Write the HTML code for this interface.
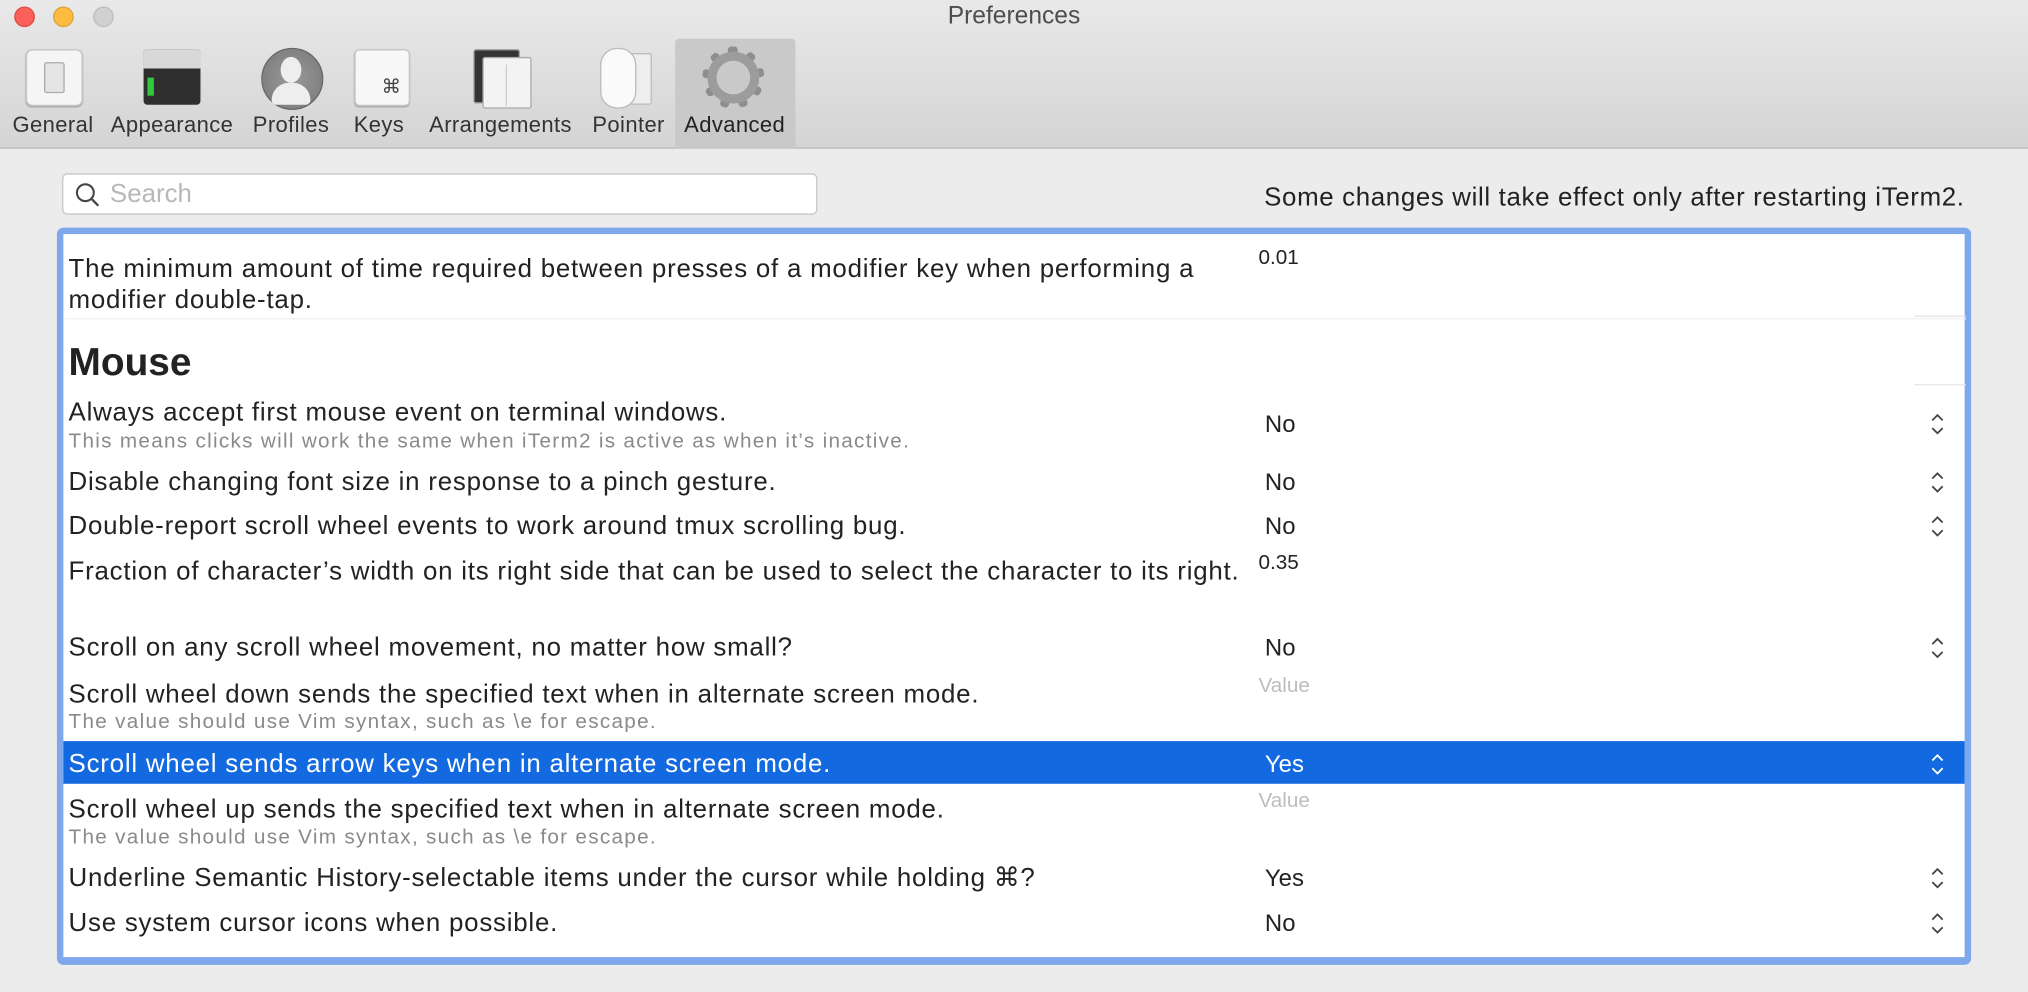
<!DOCTYPE html>
<html><head><meta charset="utf-8"><style>
html,body{margin:0;padding:0;width:2028px;height:992px;overflow:hidden;background:#ececec}
#s{position:absolute;left:0;top:0;width:1568px;height:767px;transform:scale(1.29337);transform-origin:0 0;font-family:"Liberation Sans",sans-serif;color:#222;background:#ececec}
.a{position:absolute;white-space:nowrap}
.t{font-size:20px;letter-spacing:0.6px;height:24px;line-height:24px}
.sub{font-size:16px;letter-spacing:1px;color:#8a8a8a;height:18px;line-height:18px}
.v{font-size:18.5px;height:24px;line-height:24px}
.vs{font-size:16px;height:20px;line-height:20px}
.ch{position:absolute;width:12px;height:20px}
.lab{position:absolute;top:87px;font-size:17px;letter-spacing:0.3px;color:#333;text-align:center;width:130px;height:20px;line-height:20px}
</style></head><body><div id="s">
<div class="a" style="left:0;top:0;width:1568px;height:114px;background:linear-gradient(#e9e9e9,#d4d4d4);border-bottom:1px solid #b9b9b9"></div>
<div class="a" style="left:11px;top:5px;width:14px;height:14px;border-radius:50%;background:#fc605b;border:0.5px solid #de4b45"></div>
<div class="a" style="left:41px;top:5px;width:14px;height:14px;border-radius:50%;background:#fdbc40;border:0.5px solid #dea236"></div>
<div class="a" style="left:72px;top:5px;width:14px;height:14px;border-radius:50%;background:#d0d0d0;border:0.5px solid #bdbdbd"></div>
<div class="a" style="left:0;top:3px;width:1568px;text-align:center;font-size:19px;color:#4d4d4d;line-height:20px">Preferences</div>
<div class="a" style="left:522px;top:30px;width:93px;height:85px;background:#c9c9c9;border-radius:3px 3px 0 0"></div>
<div class="a" style="left:20px;top:38px;width:42px;height:42px;background:#f5f5f5;border:1px solid #c5c5c5;border-radius:5px;box-shadow:0 1px 1px #aaa"></div>
<div class="a" style="left:34px;top:48px;width:14px;height:22px;background:#e4e4e4;border:1px solid #aaa;border-radius:2px"></div>
<div class="a" style="left:111px;top:38px;width:44px;height:43px;background:#2e2e2e;border-radius:3px"></div>
<div class="a" style="left:111px;top:38px;width:44px;height:15px;background:#d8d8d8;border-radius:3px 3px 0 0"></div>
<div class="a" style="left:114px;top:60px;width:5px;height:14px;background:#2fc83a"></div>
<div class="a" style="left:202px;top:37px;width:46px;height:46px;border-radius:50%;background:radial-gradient(#9a9a9a,#777);border:1px solid #666"></div>
<div class="a" style="left:217px;top:44px;width:16px;height:20px;border-radius:50%;background:#eee"></div>
<div class="a" style="left:210px;top:64px;width:30px;height:17px;border-radius:15px 15px 4px 4px;background:#eee"></div>
<div class="a" style="left:274px;top:38px;width:41px;height:42px;background:#f7f7f7;border:1px solid #c5c5c5;border-radius:4px;box-shadow:0 1px 1px #aaa;font-size:15px;text-align:right;line-height:58px;color:#444"><span style="margin-right:6px">⌘</span></div>
<div class="a" style="left:366px;top:38px;width:34px;height:40px;background:#333;border:1px solid #999;border-radius:2px"></div>
<div class="a" style="left:373px;top:44px;width:36px;height:38px;background:#f3f3f3;border:1px solid #aaa;border-radius:2px"></div>
<div class="a" style="left:391px;top:50px;width:1px;height:32px;background:#ccc"></div>
<div class="a" style="left:480px;top:41px;width:22px;height:38px;background:#eee;border:1px solid #bbb;border-radius:2px"></div>
<div class="a" style="left:464px;top:37px;width:26px;height:45px;background:#fafafa;border:1px solid #bbb;border-radius:13px"></div>
<div class="a" style="left:543px;top:36px;width:48px;height:48px;border-radius:50%;border:7px dotted #8e8e8e;box-sizing:border-box"></div>
<div class="a" style="left:547px;top:40px;width:40px;height:40px;border-radius:50%;border:7px solid #9c9c9c;box-sizing:border-box;background:#c9c9c9"></div>
<div class="lab" style="left:-24px">General</div>
<div class="lab" style="left:68px">Appearance</div>
<div class="lab" style="left:160px">Profiles</div>
<div class="lab" style="left:228px">Keys</div>
<div class="lab" style="left:322px">Arrangements</div>
<div class="lab" style="left:421px">Pointer</div>
<div class="lab" style="left:503px;color:#222">Advanced</div>
<div class="a" style="left:48px;top:134px;width:582px;height:30px;background:#fff;border:1px solid #c6c6c6;border-radius:4px"></div>
<svg class="a" style="left:57px;top:140px" width="22" height="22" viewBox="0 0 22 22"><circle cx="9" cy="9" r="6.5" fill="none" stroke="#444" stroke-width="1.6"/><line x1="13.8" y1="13.8" x2="19" y2="19" stroke="#444" stroke-width="1.8"/></svg>
<div class="a" style="left:85px;top:138px;font-size:20px;color:#b8b8b8;line-height:24px">Search</div>
<div class="a" style="right:49px;top:141px;font-size:20px;letter-spacing:0.5px;color:#222;line-height:24px">Some changes will take effect only after restarting iTerm2.</div>
<div class="a" style="left:44px;top:176px;width:1480px;height:570px;background:#7ea7ec;border-radius:5px"></div>
<div class="a" style="left:49px;top:181px;width:1470px;height:559px;background:#fff"></div>
<div class="a" style="left:50px;top:246px;width:1470px;height:1px;background:#f0f0f0"></div>
<div class="a" style="left:1480px;top:297px;width:40px;height:1px;background:#e4e4e4"></div>
<div class="a" style="left:1480px;top:244px;width:40px;height:1px;background:#e4e4e4"></div>
<div class="a" style="left:49px;top:573px;width:1470px;height:33px;background:#1369e0"></div>

<div class="a t" style="left:53px;top:196px">The minimum amount of time required between presses of a modifier key when performing a</div>
<div class="a t" style="left:53px;top:220px">modifier double-tap.</div>
<div class="a vs" style="left:973px;top:190px">0.01</div>
<div class="a" style="left:53px;top:262px;font-size:30px;font-weight:bold;line-height:38px">Mouse</div>

<div class="a t" style="left:53px;top:307px">Always accept first mouse event on terminal windows.</div>
<div class="a sub" style="left:53px;top:333px">This means clicks will work the same when iTerm2 is active as when it’s inactive.</div>
<div class="a v" style="left:978px;top:316px">No</div>
<div class="a t" style="left:53px;top:361px">Disable changing font size in response to a pinch gesture.</div>
<div class="a v" style="left:978px;top:361px">No</div>
<div class="a t" style="left:53px;top:395px">Double-report scroll wheel events to work around tmux scrolling bug.</div>
<div class="a v" style="left:978px;top:395px">No</div>
<div class="a t" style="left:53px;top:430px">Fraction of character’s width on its right side that can be used to select the character to its right.</div>
<div class="a vs" style="left:973px;top:426px">0.35</div>
<div class="a t" style="left:53px;top:489px">Scroll on any scroll wheel movement, no matter how small?</div>
<div class="a v" style="left:978px;top:489px">No</div>
<div class="a t" style="left:53px;top:525px">Scroll wheel down sends the specified text when in alternate screen mode.</div>
<div class="a sub" style="left:53px;top:550px">The value should use Vim syntax, such as \e for escape.</div>
<div class="a vs" style="left:973px;top:521px;color:#bdbdbd">Value</div>
<div class="a t" style="left:53px;top:579px;color:#fff">Scroll wheel sends arrow keys when in alternate screen mode.</div>
<div class="a v" style="left:978px;top:579px;color:#fff">Yes</div>
<div class="a t" style="left:53px;top:614px">Scroll wheel up sends the specified text when in alternate screen mode.</div>
<div class="a sub" style="left:53px;top:639px">The value should use Vim syntax, such as \e for escape.</div>
<div class="a vs" style="left:973px;top:610px;color:#bdbdbd">Value</div>
<div class="a t" style="left:53px;top:667px">Underline Semantic History-selectable items under the cursor while holding ⌘?</div>
<div class="a v" style="left:978px;top:667px">Yes</div>
<div class="a t" style="left:53px;top:702px">Use system cursor icons when possible.</div>
<div class="a v" style="left:978px;top:702px">No</div>

<svg class="ch" style="left:1492px;top:318px" viewBox="0 0 12 20"><path d="M2 7 L6 3 L10 7 M2 13 L6 17 L10 13" fill="none" stroke="#444" stroke-width="1.4"/></svg>
<svg class="ch" style="left:1492px;top:363px" viewBox="0 0 12 20"><path d="M2 7 L6 3 L10 7 M2 13 L6 17 L10 13" fill="none" stroke="#444" stroke-width="1.4"/></svg>
<svg class="ch" style="left:1492px;top:397px" viewBox="0 0 12 20"><path d="M2 7 L6 3 L10 7 M2 13 L6 17 L10 13" fill="none" stroke="#444" stroke-width="1.4"/></svg>
<svg class="ch" style="left:1492px;top:491px" viewBox="0 0 12 20"><path d="M2 7 L6 3 L10 7 M2 13 L6 17 L10 13" fill="none" stroke="#444" stroke-width="1.4"/></svg>
<svg class="ch" style="left:1492px;top:581px" viewBox="0 0 12 20"><path d="M2 7 L6 3 L10 7 M2 13 L6 17 L10 13" fill="none" stroke="#fff" stroke-width="1.4"/></svg>
<svg class="ch" style="left:1492px;top:669px" viewBox="0 0 12 20"><path d="M2 7 L6 3 L10 7 M2 13 L6 17 L10 13" fill="none" stroke="#444" stroke-width="1.4"/></svg>
<svg class="ch" style="left:1492px;top:704px" viewBox="0 0 12 20"><path d="M2 7 L6 3 L10 7 M2 13 L6 17 L10 13" fill="none" stroke="#444" stroke-width="1.4"/></svg>
</div></body></html>
